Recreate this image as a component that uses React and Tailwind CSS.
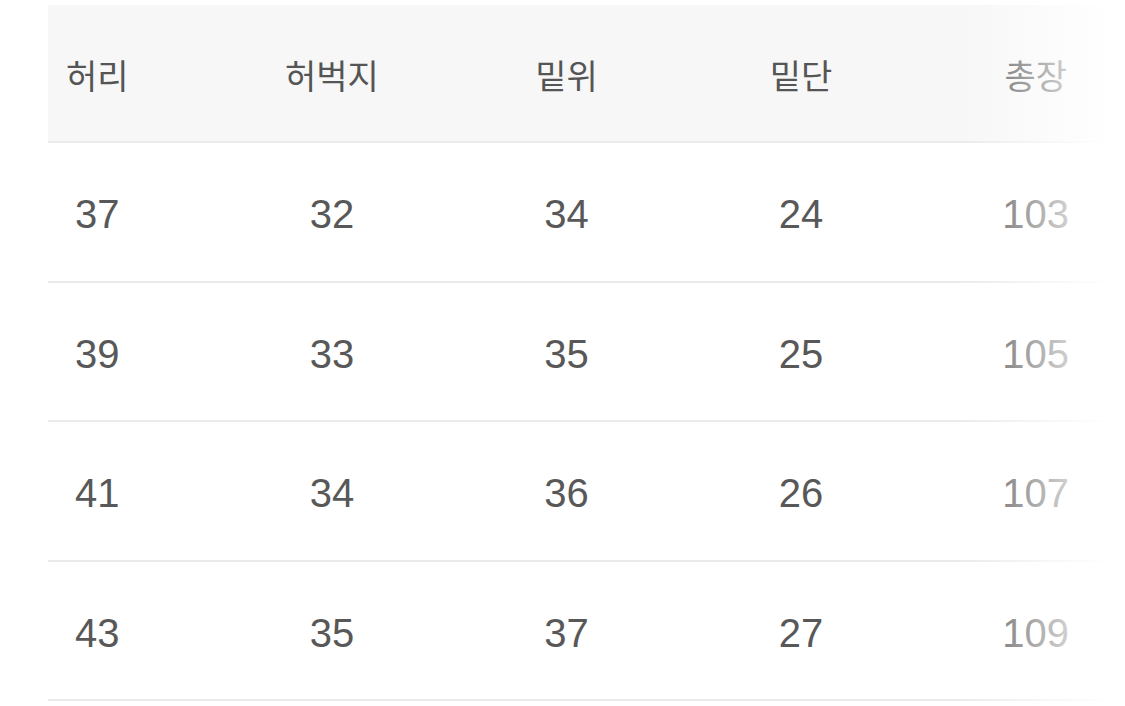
import React from "react";

const headers = ["허리", "허벅지", "밑위", "밑단", "총장"];
const rows = [
  ["37", "32", "34", "24", "103"],
  ["39", "33", "35", "25", "105"],
  ["41", "34", "36", "26", "107"],
  ["43", "35", "37", "27", "109"],
];

export default function App() {
  return (
    <div className="w-[1125px] h-[706px] bg-white overflow-hidden pt-[5px] pl-[48px]">
      <div className="relative overflow-hidden">
        <div className="ml-[-68px] w-[1173px]">
          {/* header row */}
          <div
            className="grid grid-cols-5 h-[138px] bg-[#f7f7f7] border-b-2 border-[#ebebeb] text-[#555555] text-[34px]"
            style={{ fontFamily: '"Noto Sans CJK KR", "Noto Sans", sans-serif' }}
          >
            {headers.map((h) => (
              <div key={h} className="flex items-center justify-center pt-[2px]">
                {h}
              </div>
            ))}
          </div>
          {/* body rows */}
          {rows.map((r, i) => (
            <div
              key={i}
              className="grid grid-cols-5 h-[139.5px] border-b-2 border-[#ebebeb] text-[#585858] text-[40px]"
              style={{ fontFamily: '"Liberation Sans", Arial, sans-serif' }}
            >
              {r.map((v, j) => (
                <div key={j} className="flex items-center justify-center pt-[5px]">
                  {v}
                </div>
              ))}
            </div>
          ))}
        </div>
        {/* right edge fade */}
        <div className="pointer-events-none absolute top-0 bottom-0 left-[912px] right-0 bg-gradient-to-r from-white/0 to-white to-[91%]" />
      </div>
    </div>
  );
}
